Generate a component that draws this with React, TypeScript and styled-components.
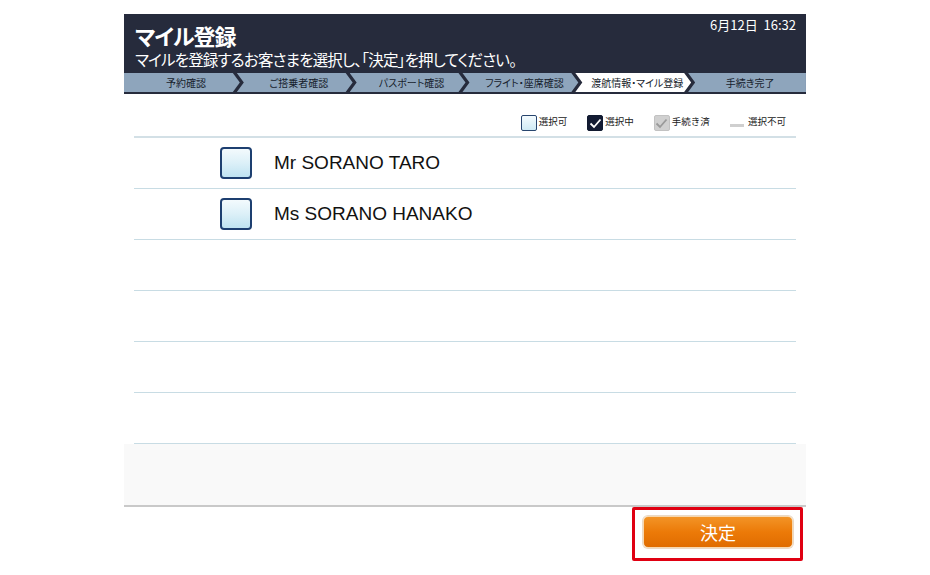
import React from "react";
import styled, { createGlobalStyle } from "styled-components";

const Global = createGlobalStyle`
  html, body { margin: 0; padding: 0; background: #ffffff; }
  body { font-family: "Noto Sans CJK JP", "Noto Sans", sans-serif; }
`;

const Page = styled.div`
  width: 930px;
  height: 575px;
  display: flex;
  flex-direction: column;
  align-items: flex-start;
  padding: 14px 0 0 124px;
  box-sizing: border-box;
`;

const Frame = styled.div`
  width: 682px;
  display: flex;
  flex-direction: column;
`;

const Header = styled.header`
  background: #262b3c;
  color: #fff;
  display: flex;
  flex-direction: column;
`;

const HeaderTop = styled.div`
  display: flex;
  justify-content: space-between;
  align-items: flex-start;
  padding: 0 10px 0 11px;
  height: 59px;
`;

const Titles = styled.div`
  display: flex;
  flex-direction: column;
  font-feature-settings: "palt";
`;

const Title = styled.h1`
  margin: 0;
  margin-top: 9px;
  font-size: 22px;
  line-height: 24px;
  letter-spacing: -1px;
  font-weight: 700;
`;

const Subtitle = styled.div`
  font-size: 15.5px;
  line-height: 20px;
  margin-top: 2px;
  letter-spacing: -0.8px;
`;

const DateText = styled.div`
  font-size: 13px;
  line-height: 18px;
  margin-top: 2px;
`;

const Steps = styled.div`
  display: flex;
  height: 19px;
  border-bottom: 2px solid #262b3c;
`;

const Step = styled.div<{ $active?: boolean; $first?: boolean; $last?: boolean }>`
  flex: 1;
  display: flex;
  align-items: center;
  justify-content: center;
  font-size: 10px;
  font-feature-settings: "palt";
  color: #161d2c;
  background: ${(p) => (p.$active ? "#ffffff" : "#8ea5bc")};
  margin-left: ${(p) => (p.$first ? "0" : "-5px")};
  padding-left: 6px;
  clip-path: ${(p) =>
    p.$last
      ? "polygon(0 0, 100% 0, 100% 100%, 0 100%, 7px 50%)"
      : p.$first
      ? "polygon(0 0, calc(100% - 9px) 0, calc(100% - 2px) 50%, calc(100% - 9px) 100%, 0 100%)"
      : "polygon(0 0, calc(100% - 9px) 0, calc(100% - 2px) 50%, calc(100% - 9px) 100%, 0 100%, 7px 50%)"};
`;

const Content = styled.main`
  background: #f9f9f9;
  height: 411px;
  display: flex;
  flex-direction: column;
  border-bottom: 2px solid #c9c9c9;
`;

const ListArea = styled.div`
  background: #ffffff;
  padding: 0 10px;
  display: flex;
  flex-direction: column;
`;

const Legend = styled.div`
  height: 44px;
  display: flex;
  justify-content: flex-end;
  align-items: flex-end;
  gap: 20px;
  padding: 0 10px 5px 0;
  border-bottom: 2px solid #d3e0e6;
  box-sizing: border-box;
`;

const LegendItem = styled.div`
  display: flex;
  align-items: flex-start;
  gap: 2px;
  font-size: 9.5px;
  color: #222;
  line-height: 13px;
  height: 16px;
`;

const LegendBox = styled.span<{ $kind: "free" | "on" | "done" | "off" }>`
  display: inline-flex;
  align-items: center;
  justify-content: center;
  width: ${(p) => (p.$kind === "off" ? "14px" : "16px")};
  height: ${(p) => (p.$kind === "off" ? "3px" : "16px")};
  box-sizing: border-box;
  border-radius: ${(p) => (p.$kind === "off" ? "0" : "2px")};
  margin-top: ${(p) => (p.$kind === "off" ? "9px" : "0")};
  border: ${(p) =>
    p.$kind === "free"
      ? "1.5px solid #27456e"
      : p.$kind === "on"
      ? "1px solid #111a30"
      : p.$kind === "done"
      ? "1px solid #c2c2c2"
      : "none"};
  background: ${(p) =>
    p.$kind === "free"
      ? "linear-gradient(#f4fbfe, #cfeaf5)"
      : p.$kind === "on"
      ? "#131b33"
      : p.$kind === "done"
      ? "#d0d0d0"
      : "#cfcfcf"};
`;

const Row = styled.div`
  height: 51px;
  display: flex;
  align-items: center;
  gap: 22px;
  padding-left: 86px;
  border-bottom: 1px solid #c8dce4;
  box-sizing: border-box;
`;

const CheckBox = styled.span`
  width: 32px;
  height: 32px;
  box-sizing: border-box;
  border: 2px solid #1d3f70;
  border-radius: 4px;
  background: linear-gradient(#f3fafd 0%, #dcf0f8 50%, #bfe3f1 100%);
`;

const Name = styled.span`
  font-family: "Liberation Sans", Arial, sans-serif;
  font-size: 19px;
  color: #111;
`;

const Footer = styled.div`
  display: flex;
  justify-content: flex-end;
  padding: 0 3px 0 0;
`;

const Highlight = styled.div`
  border: 3px solid #e00012;
  border-radius: 2px;
  padding: 6px 7px 10px 8px;
`;

const DecideButton = styled.button`
  width: 150px;
  height: 32px;
  border-radius: 5px;
  border: 1px solid #f7d7ae;
  box-shadow: 0 0 0 1px #ead9c6;
  background: linear-gradient(#f39426 0%, #ec7a08 50%, #e06c00 100%);
  color: #fff;
  font-family: "Noto Sans CJK JP", sans-serif;
  font-size: 18px;
  line-height: 1;
  padding: 0;
  display: flex;
  align-items: center;
  justify-content: center;
`;

const Check = ({ color }: { color: string }) => (
  <svg width="13" height="11" viewBox="0 0 13 11">
    <path d="M1.5 5.5 L5 9 L11.5 1.5" fill="none" stroke={color} strokeWidth="1.8" />
  </svg>
);

const steps = ["予約確認", "ご搭乗者確認", "パスポート確認", "フライト・座席確認", "渡航情報・マイル登録", "手続き完了"];
const names = ["Mr SORANO TARO", "Ms SORANO HANAKO", "", "", "", ""];

export default function App() {
  return (
    <>
      <Global />
      <Page>
        <Frame>
          <Header>
            <HeaderTop>
              <Titles>
                <Title>マイル登録</Title>
                <Subtitle>マイルを登録するお客さまを選択し、「決定」を押してください。</Subtitle>
              </Titles>
              <DateText>6月12日&nbsp;&nbsp;16:32</DateText>
            </HeaderTop>
            <Steps>
              {steps.map((s, i) => (
                <Step key={s} $first={i === 0} $last={i === steps.length - 1} $active={i === 4}>
                  {s}
                </Step>
              ))}
            </Steps>
          </Header>
          <Content>
            <ListArea>
              <Legend>
                <LegendItem>
                  <LegendBox $kind="free" />
                  選択可
                </LegendItem>
                <LegendItem>
                  <LegendBox $kind="on">
                    <Check color="#ffffff" />
                  </LegendBox>
                  選択中
                </LegendItem>
                <LegendItem>
                  <LegendBox $kind="done">
                    <Check color="#9a9a9a" />
                  </LegendBox>
                  手続き済
                </LegendItem>
                <LegendItem>
                  <LegendBox $kind="off" />
                  &nbsp;選択不可
                </LegendItem>
              </Legend>
              {names.map((n, i) => (
                <Row key={i}>
                  {n && (
                    <>
                      <CheckBox />
                      <Name>{n}</Name>
                    </>
                  )}
                </Row>
              ))}
            </ListArea>
          </Content>
          <Footer>
            <Highlight>
              <DecideButton>決定</DecideButton>
            </Highlight>
          </Footer>
        </Frame>
      </Page>
    </>
  );
}
